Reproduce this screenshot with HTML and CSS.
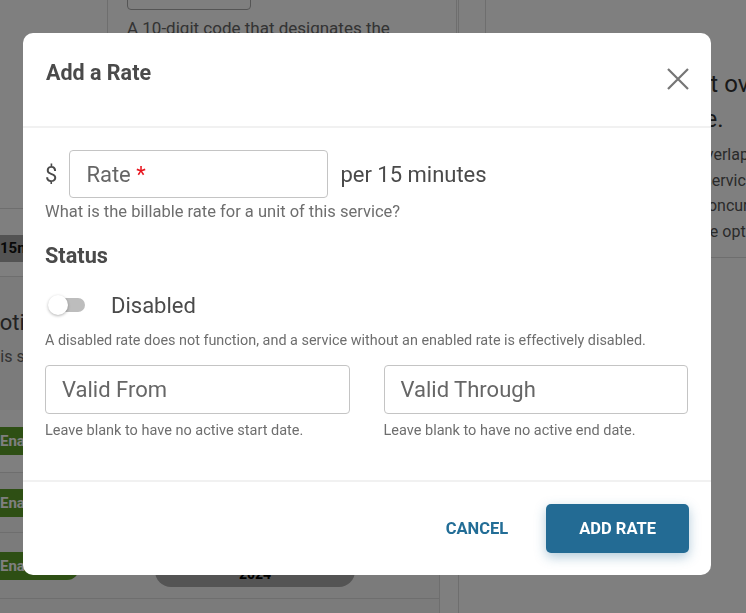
FILE: index.html
```html
<!DOCTYPE html>
<html>
<head>
    <meta charset="UTF-8">
    <title>Add a Rate</title>
    <link rel="stylesheet" href="styles.css">
</head>
<body>
    <div class="page">
        <div class="main">
            <div class="top">
                <div class="top-gap"></div>
                <div class="code-card">
                    <div class="code-box"></div>
                    <p class="code-help">A 10-digit code that designates the type of service provided.</p>
                </div>
            </div>
            <div class="rates">
                <div class="unit-row"><span class="unit-tag">15min</span></div>
                <h2 class="rates-title">Negotiated Rates</h2>
                <p class="rates-help">This service has the following rates.</p>
                <div class="rate-row hl"><span class="badge">Enabled</span><span class="pill">Jan 1, 2022</span></div>
                <div class="rate-row"><span class="badge">Enabled</span><span class="pill">Jan 1, 2023</span></div>
                <div class="rate-row tall"><span class="badge">Enabled</span><span class="pill">Jan 1,<br>2024</span></div>
                <div class="rate-row"><span class="pill">Jan 1,<br>2025</span></div>
            </div>
        </div>
        <div class="side">
            <div class="panel">
                <h3 class="panel-title">Allow concurrent overlap<br>at the same time.</h3>
                <p class="panel-text">Allow these services to overlap<br>time with another active service<br>so they may both run at concurrently.<br>Most services do leave the option off.</p>
            </div>
        </div>
    </div>

    <div class="backdrop">
        <div class="modal">
            <div class="modal-head">
                <h1 class="modal-title">Add a Rate</h1>
                <button class="close">
                    <svg width="22" height="22" viewBox="0 0 22 22"><path d="M1 1 L21 21 M21 1 L1 21" stroke="#757575" stroke-width="2.2" fill="none"/></svg>
                </button>
            </div>
            <div class="modal-body">
                <div class="rate-line">
                    <span class="big">$</span>
                    <div class="field rate-field"><span class="ph">Rate <b class="req">*</b></span></div>
                    <span class="big">per 15 minutes</span>
                </div>
                <p class="help first">What is the billable rate for a unit of this service?</p>
                <h2 class="sub">Status</h2>
                <div class="switch-row">
                    <div class="switch">
                        <span class="knob"></span>
                        <span class="track"></span>
                    </div>
                    <span class="big">Disabled</span>
                </div>
                <p class="help">A disabled rate does not function, and a service without an enabled rate is effectively disabled.</p>
                <div class="dates">
                    <div>
                        <div class="field date-field"><span class="ph">Valid From</span></div>
                        <p class="help small">Leave blank to have no active start date.</p>
                    </div>
                    <div>
                        <div class="field date-field"><span class="ph">Valid Through</span></div>
                        <p class="help small">Leave blank to have no active end date.</p>
                    </div>
                </div>
            </div>
            <div class="modal-foot">
                <button class="btn-text">CANCEL</button>
                <button class="btn-main">ADD RATE</button>
            </div>
        </div>
    </div>
</body>
</html>
```

FILE: styles.css
```css
* {
    box-sizing: border-box;
}

body {
    margin: 0;
    font-family: Roboto, "Noto Sans", sans-serif;
    background: #fff;
    overflow: hidden;
}

/* page behind the dialog */

.page {
    display: flex;
    height: 613px;
    overflow: hidden;
}

.main {
    width: 458px;
    flex: none;
}

.top {
    display: flex;
    height: 208px;
}

.top-gap {
    width: 107px;
    flex: none;
}

.code-card {
    width: 350px;
    border-left: 1px solid #ddd;
    border-right: 1px solid #ddd;
    padding-left: 19px;
}

.code-box {
    width: 124px;
    height: 40px;
    margin-top: -30px;
    border: 1px solid #aaa;
    border-radius: 4px;
}

.code-help {
    margin: 6px 0 0;
    max-width: 280px;
    font-size: 17px;
    line-height: 24px;
    color: #666;
}

.rates {
    width: 486px;
    margin-left: -46px;
    border-right: 1px solid #ddd;
    background: #f6f6f6;
    height: 405px;
}

.unit-row {
    border-top: 1px solid #ddd;
    border-bottom: 1px solid #ddd;
    padding: 26px 0 14px 40px;
    background: #fff;
}

.unit-tag {
    display: inline-block;
    line-height: 27px;
    padding: 0 6px;
    background: #a6a6a6;
    font-size: 15px;
    font-weight: 700;
    color: #111;
}

.rates-title {
    margin: 31px 0 0;
    padding-left: 6px;
    font-size: 22px;
    line-height: 30px;
    font-weight: 400;
    color: #444;
}

.rates-help {
    margin: 8px 0 0;
    padding-left: 28px;
    font-size: 16px;
    line-height: 22px;
    color: #666;
}

.rate-row {
    display: flex;
    align-items: center;
    height: 60px;
    border-bottom: 1px solid #ddd;
}

.rate-row.hl {
    margin-top: 42px;
    height: 63px;
    background: #fff;
}

.rate-row.tall {
    height: 66px;
}

.badge {
    width: 125px;
    line-height: 28px;
    padding-left: 46px;
    background: #5c9e28;
    color: #fff;
    font-size: 15px;
    font-weight: 700;
    border-radius: 0 12px 12px 0;
}

.pill {
    width: 200px;
    margin-left: 76px;
    padding: 4px 0;
    background: #a8a8a8;
    border-radius: 16px;
    text-align: center;
    font-size: 14px;
    line-height: 17px;
    font-weight: 700;
    color: #000;
}

.rate-row:last-child .pill {
    margin-top: 18px;
    width: 188px;
}

.side {
    flex: 1;
    border-left: 1px solid #ddd;
}

.panel {
    margin-left: 26px;
    border-left: 1px solid #ddd;
    border-bottom: 1px solid #ddd;
    padding: 67px 0 13px 52px;
    white-space: nowrap;
}

.panel-title {
    margin: 0;
    font-size: 24px;
    line-height: 35px;
    font-weight: 400;
    color: #333;
}

.panel-text {
    margin: 5px 0 0 -9px;
    font-size: 16px;
    line-height: 25.5px;
    color: #555;
}

/* dialog */

.backdrop {
    position: fixed;
    top: 0;
    left: 0;
    right: 0;
    bottom: 0;
    background: rgba(0, 0, 0, .5);
}

.modal {
    margin: 33px 0 0 23px;
    width: 688px;
    height: 542px;
    background: #fff;
    border-radius: 10px;
    display: flex;
    flex-direction: column;
    overflow: hidden;
}

.modal-head {
    display: flex;
    justify-content: space-between;
    align-items: flex-start;
    height: 95px;
    padding: 26px 22px 0 23px;
    border-bottom: 2px solid #f1f1f1;
}

.modal-title {
    margin: 0;
    font-size: 21.5px;
    line-height: 28px;
    font-weight: 700;
    color: #4a4a4a;
}

.close {
    margin-top: 9px;
    padding: 0;
    border: 0;
    background: none;
    width: 22px;
    height: 22px;
}

.close svg {
    display: block;
}

.modal-body {
    flex: 1;
    padding: 22px 23px 0 22px;
}

.rate-line {
    display: flex;
    align-items: center;
    gap: 12px;
}

.big {
    font-size: 22px;
    color: #4a4a4a;
}

.field {
    display: flex;
    align-items: center;
    border: 1px solid #c4c4c4;
    border-radius: 4px;
    padding-left: 16px;
}

.rate-field {
    width: 259px;
    height: 48px;
}

.ph {
    font-size: 22px;
    color: #666;
}

.req {
    color: #e8141e;
    font-weight: 400;
}

.help {
    margin: 6px 0 0;
    font-size: 14.4px;
    line-height: 20px;
    color: #6e6e6e;
}

.help.first {
    margin-top: 4px;
    font-size: 16.5px;
    line-height: 20px;
}

.sub {
    margin: 22px 0 0;
    font-size: 21.7px;
    line-height: 24px;
    font-weight: 700;
    color: #4a4a4a;
}

.switch-row {
    display: flex;
    align-items: center;
    height: 40px;
    margin-top: 17px;
}

.switch {
    display: flex;
    align-items: center;
    margin-left: 3px;
    margin-right: 26px;
}

.knob {
    width: 20px;
    height: 20px;
    border-radius: 50%;
    background: #fff;
    box-shadow: 0 1px 3px rgba(0, 0, 0, .3);
    flex: none;
    position: relative;
    z-index: 1;
}

.track {
    width: 34px;
    height: 14px;
    margin-left: -17px;
    border-radius: 7px;
    background: #bdbdbd;
}

.dates {
    display: grid;
    grid-template-columns: 1fr 1fr;
    gap: 34px;
    margin-top: 14px;
}

.date-field {
    height: 49px;
}

.help.small {
    margin-top: 7px;
    font-size: 14.5px;
}

.modal-foot {
    height: 95px;
    border-top: 2px solid #f1f1f1;
    display: flex;
    align-items: center;
    justify-content: flex-end;
    padding: 0 22px;
}

.btn-text {
    border: 0;
    background: none;
    padding: 0 16px;
    height: 40px;
    font-family: inherit;
    font-size: 16.5px;
    font-weight: 700;
    color: #226d96;
}

.btn-main {
    margin-left: 22px;
    height: 49px;
    padding: 0 33px;
    border: 0;
    border-radius: 5px;
    background: #236b94;
    color: #fff;
    font-family: inherit;
    font-size: 16.5px;
    font-weight: 700;
    box-shadow: 0 4px 12px rgba(35, 107, 148, .35);
}
```
